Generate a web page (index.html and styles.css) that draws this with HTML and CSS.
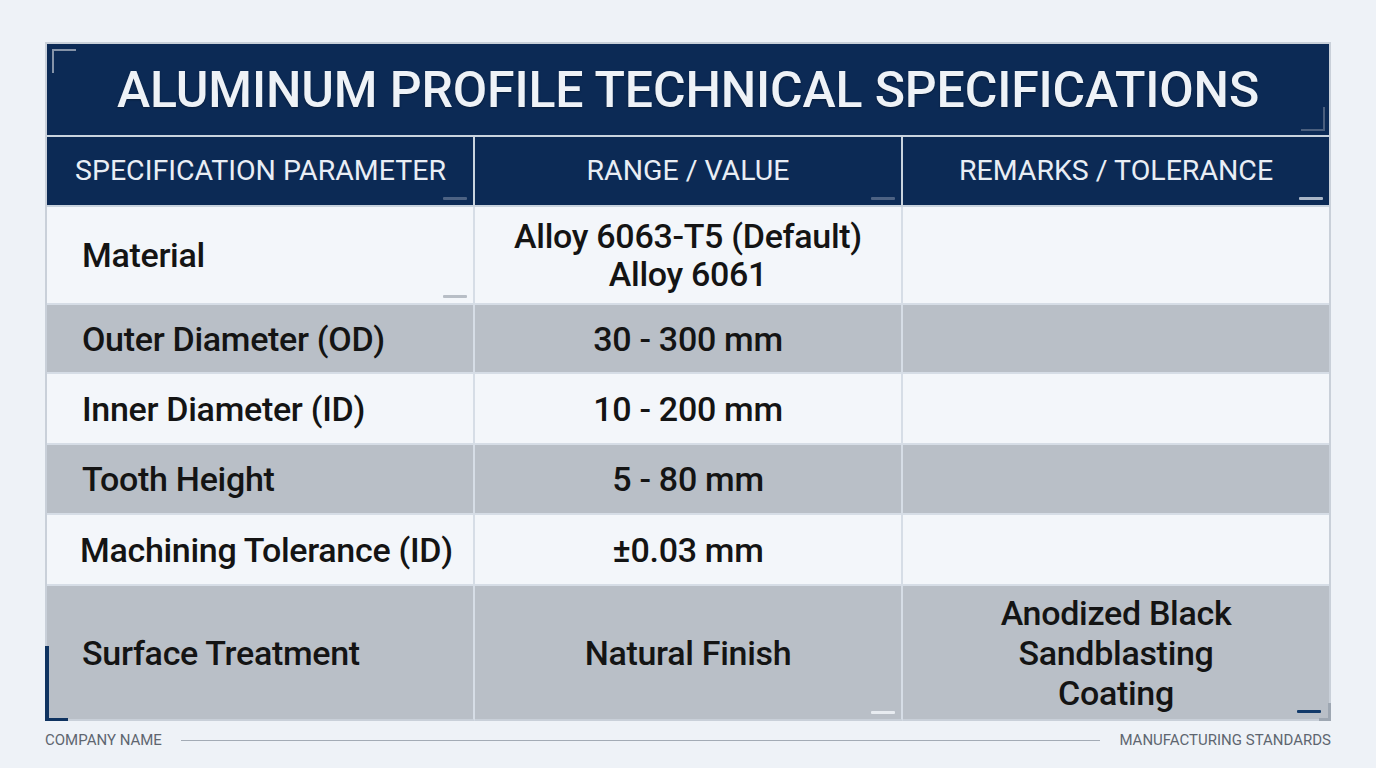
FILE: index.html
```html
<!DOCTYPE html>
<html lang="en">
<head>
<meta charset="utf-8">
<title>Aluminum Profile Technical Specifications</title>
<link rel="stylesheet" href="styles.css">
</head>
<body>
<div class="page">
  <div class="sheet">
    <div class="title">
      <span class="corner corner-tl"></span>
      <h1>ALUMINUM PROFILE TECHNICAL SPECIFICATIONS</h1>
      <span class="corner corner-br"></span>
    </div>
    <div class="grid">
      <div class="cell head left">SPECIFICATION PARAMETER<span class="dash dash-head"></span></div>
      <div class="cell head">RANGE / VALUE<span class="dash dash-head"></span></div>
      <div class="cell head last">REMARKS / TOLERANCE<span class="dash dash-head-light"></span></div>

      <div class="cell light left r1">Material<span class="dash dash-gray"></span></div>
      <div class="cell light r1">Alloy 6063-T5 (Default)<br>Alloy 6061</div>
      <div class="cell light last r1"></div>

      <div class="cell gray left">Outer Diameter (OD)</div>
      <div class="cell gray">30 - 300 mm</div>
      <div class="cell gray last"></div>

      <div class="cell light left">Inner Diameter (ID)</div>
      <div class="cell light">10 - 200 mm</div>
      <div class="cell light last"></div>

      <div class="cell gray left">Tooth Height</div>
      <div class="cell gray">5 - 80 mm</div>
      <div class="cell gray last"></div>

      <div class="cell light left tight">Machining Tolerance (ID)</div>
      <div class="cell light">±0.03 mm</div>
      <div class="cell light last"></div>

      <div class="cell gray left end">Surface Treatment<span class="bracket-bl"></span></div>
      <div class="cell gray end">Natural Finish<span class="dash dash-white"></span></div>
      <div class="cell gray last end">Anodized Black<br>Sandblasting<br>Coating<span class="dash dash-navy"></span><span class="bracket-br"></span></div>
    </div>
  </div>
  <div class="footer">
    <span class="foot-text">COMPANY NAME</span>
    <span class="foot-line"></span>
    <span class="foot-text">MANUFACTURING STANDARDS</span>
  </div>
</div>
</body>
</html>
```

FILE: styles.css
```css
* { box-sizing: border-box; }
html, body { margin: 0; padding: 0; }
body {
  background: #eef2f7;
  font-family: Roboto, "Liberation Sans", Arial, sans-serif;
  color: #111;
  width: 1376px;
  height: 768px;
  overflow: hidden;
}
.page {
  padding: 42px 45px 0 45px;
}
.sheet {
  width: 1286px;
  border: 2px solid #c9d0d9;
  border-bottom: none;
  background: #f3f6fa;
}
.title {
  position: relative;
  height: 93px;
  background: #0c2a55;
  display: flex;
  align-items: center;
  justify-content: center;
  border-bottom: 2px solid #c9d3de;
}
.title h1 {
  margin: 0;
  font-weight: 500;
  font-size: 50px;
  color: #eef2f7;
  letter-spacing: -0.15px;
  text-shadow: 0 1px 2px rgba(0,0,0,0.35);
}
.corner {
  position: absolute;
  width: 24px;
  height: 24px;
  border-color: #8593a8;
  border-style: solid;
  border-width: 0;
}
.corner-tl { left: 5px; top: 5px; border-top-width: 2px; border-left-width: 2px; }
.corner-br { right: 4px; bottom: 4px; border-bottom-width: 2px; border-right-width: 2px; border-color: #4b5f7e; }

.grid {
  display: grid;
  grid-template-columns: 428px 428px 426px;
  grid-template-rows: 70px 98px 69px 71px 70px 71px 135px;
}
.cell {
  position: relative;
  display: flex;
  align-items: center;
  justify-content: center;
  text-align: center;
  font-size: 34px;
  font-weight: 500;
  letter-spacing: -0.3px;
  line-height: 38px;
  color: #141414;
  border-right: 2px solid #d6dde6;
  border-bottom: 2px solid #d6dde6;
}
.cell.last { border-right: none; }
.cell.left { justify-content: flex-start; text-align: left; padding-left: 35px; }
.cell.left.tight { padding-left: 33px; }
.cell.end { border-bottom: 2px solid #c9d0d9; line-height: 40px; }
.head {
  background: #0c2a55;
  color: #e9eef5;
  font-size: 28.5px;
  font-weight: 400;
  letter-spacing: 0;
  border-right-color: #c9d3de;
  border-bottom-color: #c9d3de;
}
.head.left { padding-left: 28px; }
.light { background: #f3f6fa; }
.gray { background: #b9bfc7; }

.dash {
  position: absolute;
  right: 6px;
  bottom: 5px;
  width: 24px;
  height: 3px;
  border-radius: 1px;
}
.dash-head { background: #4d6283; }
.dash-head-light { background: #a9b6c8; }
.dash-gray { background: #b8bec6; }
.dash-white { background: #e8ecf1; }
.dash-navy { background: #123a6a; right: 8px; bottom: 6px; }

.bracket-bl {
  position: absolute;
  left: -2px;
  bottom: -2px;
  width: 23px;
  height: 75px;
  border-left: 4px solid #0f3360;
  border-bottom: 3px solid #0f3360;
}
.bracket-br {
  position: absolute;
  right: -2px;
  bottom: -2px;
  width: 12px;
  height: 18px;
  border-right: 3px solid #9ea7b2;
  border-bottom: 3px solid #9ea7b2;
}

.footer {
  width: 1286px;
  height: 38px;
  display: flex;
  align-items: center;
  gap: 19px;
}
.foot-text {
  font-size: 15px;
  color: #5e6670;
}
.foot-line {
  flex: 1;
  height: 1px;
  background: #a3abb5;
}
```
